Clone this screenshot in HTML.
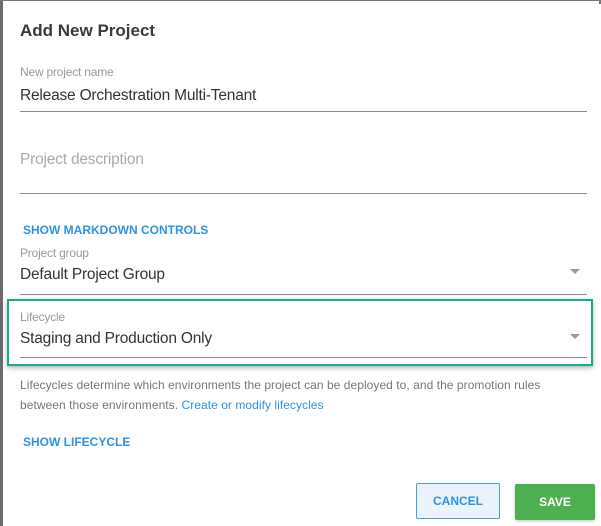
<!DOCTYPE html>
<html><head><meta charset="utf-8"><style>
*{margin:0;padding:0;box-sizing:border-box}
body{width:601px;height:526px;background:#fff;position:relative;overflow:hidden;font-family:"Liberation Sans",Arial,sans-serif;}
.a{position:absolute;white-space:nowrap}
.lbl{font-size:12px;color:#9a9a9a;letter-spacing:-0.2px}
.val{font-size:15.5px;color:#333;letter-spacing:-0.2px}
.line{position:absolute;left:20px;width:567px;height:1px;background:#8a8a8a}
.link{font-size:12px;font-weight:bold;color:#2f93e0;letter-spacing:0}
.arr{position:absolute;width:0;height:0;border-left:5px solid transparent;border-right:5px solid transparent;border-top:5px solid #9a9a9a}
</style></head><body>
<div class="a" style="left:0;top:0;width:3px;height:526px;background:#6b6b6b"></div>
<div class="a" style="left:0;top:0;width:601px;height:1px;background:#777"></div>
<div class="a" style="left:599px;top:0;width:2px;height:4px;background:#777"></div>
<div class="a" style="left:20px;top:21px;font-size:17px;font-weight:bold;color:#3a3a3a;letter-spacing:0">Add New Project</div>
<div class="a lbl" style="left:20px;top:65px">New project name</div>
<div class="a val" style="left:20px;top:87px">Release Orchestration Multi-Tenant</div>
<div class="line" style="top:111px"></div>
<div class="a val" style="left:20px;top:151px;color:#aaa">Project description</div>
<div class="line" style="top:193px"></div>
<div class="a link" style="left:23px;top:223px">SHOW MARKDOWN CONTROLS</div>
<div class="a lbl" style="left:20px;top:246px">Project group</div>
<div class="a val" style="left:20px;top:266px">Default Project Group</div>
<div class="arr" style="left:570px;top:269px"></div>
<div class="line" style="top:294px"></div>
<div class="a" style="left:7px;top:299px;width:586px;height:67px;border:2px solid #1aab8a;box-shadow:0 2px 5px rgba(0,0,0,0.3)"></div>
<div class="a lbl" style="left:20px;top:310px">Lifecycle</div>
<div class="a val" style="left:20px;top:330px">Staging and Production Only</div>
<div class="arr" style="left:570px;top:334px"></div>
<div class="line" style="top:357px"></div>
<div class="a" style="left:20px;top:378px;font-size:12px;color:#777;letter-spacing:0.05px">Lifecycles determine which environments the project can be deployed to, and the promotion rules</div>
<div class="a" style="left:20px;top:398px;font-size:12px;color:#777;letter-spacing:0.05px">between those environments. <span style="color:#2f93e0">Create or modify lifecycles</span></div>
<div class="a link" style="left:23px;top:435px">SHOW LIFECYCLE</div>
<div class="a" style="left:416px;top:483px;width:84px;height:36px;background:#eaf3fc;border:1px solid #4a9fe0;border-radius:2px;color:#2f93e0;font-size:12px;font-weight:bold;text-align:center;line-height:35px">CANCEL</div>
<div class="a" style="left:515px;top:484px;width:80px;height:36px;background:#4caf50;border-radius:2px;color:#fff;font-size:12px;font-weight:bold;text-align:center;line-height:37px;box-shadow:0 1px 3px rgba(0,0,0,0.25)">SAVE</div>
</body></html>
